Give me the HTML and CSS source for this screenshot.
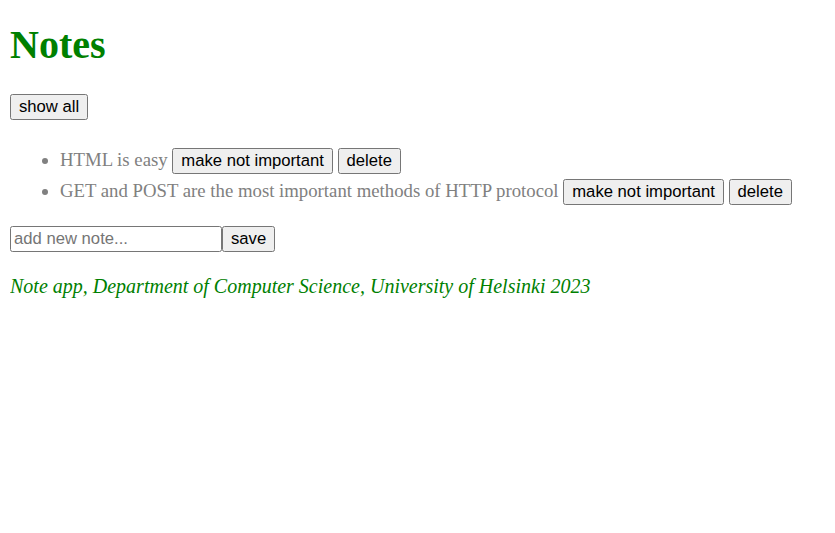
FILE: index.html
```html
<!DOCTYPE html>
<html>
<head>
<meta charset="utf-8">
<title>Notes</title>
<link rel="stylesheet" href="styles.css">
</head>
<body class="page">
<div id="root">
  <h1 class="title">Notes</h1>
  <div class="toolbar"><button class="btn">show all</button></div>
  <ul class="notes">
    <li class="note">HTML is easy <button class="btn">make not important</button> <button class="btn">delete</button></li>
    <li class="note">GET and POST are the most important methods of HTTP protocol <button class="btn">make not important</button> <button class="btn">delete</button></li>
  </ul>
  <form class="note-form"><input class="note-input" placeholder="add new note..."><button class="btn" type="submit">save</button></form>
  <div class="footer"><br><em>Note app, Department of Computer Science, University of Helsinki 2023</em></div>
</div>
</body>
</html>
```

FILE: styles.css
```css
.page {
  margin: 10px;
  font-family: "Liberation Serif", "Times New Roman", serif;
  font-size: 20px;
  background: #fff;
}
.title {
  color: green;
  font-size: 40px;
  font-weight: bold;
  margin: 11px 0 26px;
}
.btn {
  font-family: "Liberation Sans", Arial, sans-serif;
  font-size: 16.67px;
  padding: 2px 8px;
  border: 1px solid #767676;
  border-radius: 2.5px;
  background: #efefef;
  color: #000;
}
.notes {
  margin: 22px 0 21px;
  padding-left: 50px;
}
.note {
  color: grey;
  padding-top: 5.5px;
  font-size: 18.75px;
}
.note-form {
  margin: 0;
}
.note-input {
  font-family: "Liberation Sans", Arial, sans-serif;
  font-size: 16.67px;
  width: 212px;
  box-sizing: border-box;
  padding: 2px 3px;
  border: 1px solid #767676;
  border-radius: 2.5px;
  color: #000;
}
.note-input::placeholder {
  color: #757575;
}
.footer {
  color: green;
  font-style: italic;
  font-size: 20px;
}
```
